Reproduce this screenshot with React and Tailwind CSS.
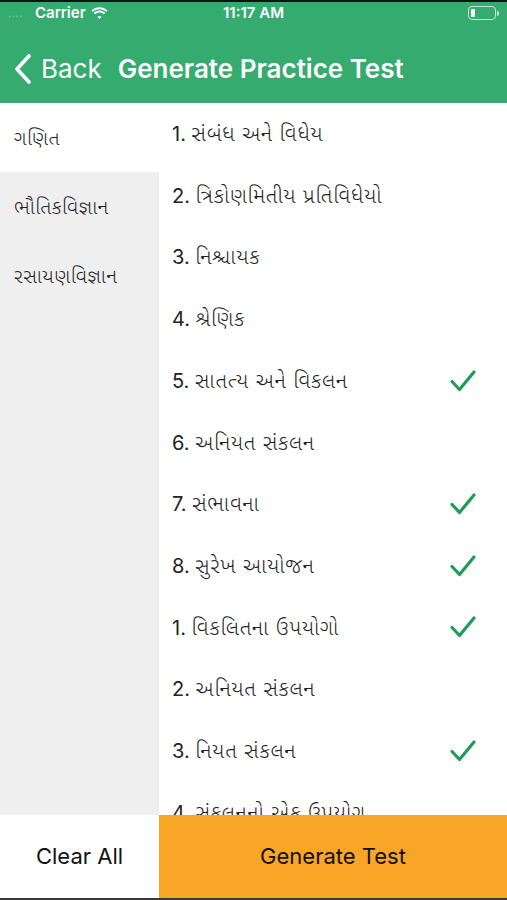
import React, { useState } from "react";

const subjects = ["ગણિત", "ભૌતિકવિજ્ઞાન", "રસાયણવિજ્ઞાન"];

const chapters = [
    { no: "1.", name: "સંબંધ અને વિધેય", checked: false },
    { no: "2.", name: "ત્રિકોણમિતીય પ્રતિવિધેયો", checked: false },
    { no: "3.", name: "નિશ્ચાયક", checked: false },
    { no: "4.", name: "શ્રેણિક", checked: false },
    { no: "5.", name: "સાતત્ય અને વિકલન", checked: true },
    { no: "6.", name: "અનિયત સંકલન", checked: false },
    { no: "7.", name: "સંભાવના", checked: true },
    { no: "8.", name: "સુરેખ આયોજન", checked: true },
    { no: "1.", name: "વિકલિતના ઉપયોગો", checked: true },
    { no: "2.", name: "અનિયત સંકલન", checked: false },
    { no: "3.", name: "નિયત સંકલન", checked: true },
    { no: "4.", name: "સંકલનનો એક ઉપયોગ", checked: false },
];

function Check() {
    return (
        <svg width="28" height="24" viewBox="0 0 28 24" fill="none">
            <polyline
                points="3,12.5 10.5,20.5 25,3"
                stroke="#1f9d57"
                strokeWidth="3.2"
                strokeLinecap="round"
                strokeLinejoin="round"
            />
        </svg>
    );
}

function StatusBar() {
    return (
        <div className="h-[22px] flex items-center justify-between px-[8px] text-white text-[15px] font-semibold">
            <div className="flex items-center gap-[5px] w-[150px]">
                <span className="text-[9px] tracking-[1px] text-white/40 leading-none w-[22px]">....</span>
                <span>Carrier</span>
                <svg width="17" height="12" viewBox="0 0 17 12" fill="white">
                    <path d="M8.5 2.2c2.6 0 5 1 6.8 2.7l1.3-1.4C14.4 1.4 11.6.2 8.5.2S2.6 1.4.4 3.5l1.3 1.4C3.5 3.2 5.9 2.2 8.5 2.2z" />
                    <path d="M8.5 5.6c1.7 0 3.2.6 4.4 1.7l1.3-1.4C12.7 4.5 10.7 3.6 8.5 3.6S4.3 4.5 2.8 5.9l1.3 1.4c1.2-1.1 2.7-1.7 4.4-1.7z" />
                    <path d="M8.5 8.9c.8 0 1.5.3 2 .8l-2 2.2-2-2.2c.5-.5 1.2-.8 2-.8z" />
                </svg>
            </div>
            <span>11:17 AM</span>
            <div className="w-[150px] flex justify-end items-center">
                <div className="w-[28px] h-[14px] rounded-[4px] border border-white/70 p-[2px] flex">
                    <div className="w-[4px] h-full rounded-[1px] bg-white"></div>
                </div>
                <div className="w-[2px] h-[5px] bg-white/70 rounded-r-sm ml-[1px]"></div>
            </div>
        </div>
    );
}

export default function App() {
    const [selected, setSelected] = useState(0);

    return (
        <div
            className="w-[507px] h-[900px] flex flex-col bg-white border-t-2 border-b-2 border-t-[#111] border-b-[#3a3a3a] overflow-hidden"
            style={{ fontFamily: "Inter, 'Noto Sans', 'Noto Sans Gujarati', 'Lohit Gujarati', sans-serif" }}
        >
            <div className="bg-[#35ab6f]">
                <StatusBar />
                <div className="h-[79px] flex items-center pt-[10px] pl-[14px] text-white">
                    <svg width="18" height="30" viewBox="0 0 18 30" fill="none" className="mr-[9px]">
                        <polyline points="15,2 3,15 15,28" stroke="white" strokeWidth="3.6" strokeLinecap="round" strokeLinejoin="round" />
                    </svg>
                    <span className="text-[26px] mr-[16px]">Back</span>
                    <span className="text-[26px] font-semibold">Generate Practice Test</span>
                </div>
            </div>

            <div className="flex-1 flex min-h-0">
                <div className="w-[159px] bg-[#efefef]">
                    {subjects.map((s, i) => (
                        <button
                            key={s}
                            onClick={() => setSelected(i)}
                            className={`w-full h-[69px] flex items-center pl-[14px] text-[20px] tracking-[0.5px] font-light text-[#222] text-left whitespace-nowrap ${selected === i ? "bg-white" : ""}`}
                        >
                            {s}
                        </button>
                    ))}
                </div>
                <div className="flex-1 overflow-hidden">
                    {chapters.map((c, i) => (
                        <div key={i} className="h-[61.7px] flex items-center justify-between pl-[13px] pr-[30px]">
                            <span className="text-[#222] whitespace-nowrap">
                                <span className="text-[20px]">{c.no} </span>
                                <span className="text-[21px] tracking-[0.8px] font-light">{c.name}</span>
                            </span>
                            {c.checked && <Check />}
                        </div>
                    ))}
                </div>
            </div>

            <div className="h-[83px] flex shrink-0">
                <button className="w-[159px] bg-white text-[22px] text-[#111]">Clear All</button>
                <button className="flex-1 bg-[#f9a628] text-[22px] text-[#111]">Generate Test</button>
            </div>
        </div>
    );
}
